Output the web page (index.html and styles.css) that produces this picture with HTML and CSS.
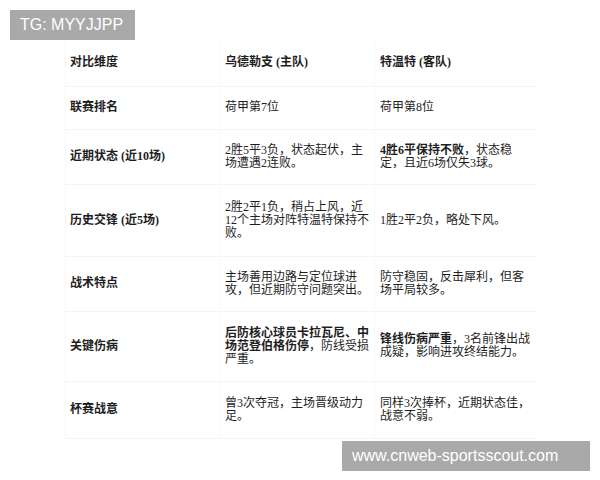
FILE: index.html
```html
<!DOCTYPE html>
<html lang="zh">
<head>
<meta charset="utf-8">
<link rel="stylesheet" href="styles.css">
</head>
<body>
<div class="badge top">TG: MYYJJPP</div>
<table class="cmp">
  <colgroup><col class="c1"><col class="c2"><col class="c3"></colgroup>
  <tr class="r0"><th>对比维度</th><th class="m">乌德勒支 (主队)</th><th class="l">特温特 (客队)</th></tr>
  <tr class="r1"><th>联赛排名</th><td class="m">荷甲第7位</td><td class="l">荷甲第8位</td></tr>
  <tr class="r2"><th>近期状态 (近10场)</th><td class="m">2胜5平3负，状态起伏，主场遭遇2连败。</td><td class="l"><b>4胜6平保持不败</b>，状态稳定，且近6场仅失3球。</td></tr>
  <tr class="r3"><th>历史交锋 (近5场)</th><td class="m">2胜2平1负，稍占上风，近12个主场对阵特温特保持不败。</td><td class="l">1胜2平2负，略处下风。</td></tr>
  <tr class="r4"><th>战术特点</th><td class="m">主场善用边路与定位球进攻，但近期防守问题突出。</td><td class="l">防守稳固，反击犀利，但客场平局较多。</td></tr>
  <tr class="r5"><th>关键伤病</th><td class="m"><b>后防核心球员卡拉瓦尼、中场范登伯格伤停</b>，防线受损严重。</td><td class="l"><b>锋线伤病严重</b>，3名前锋出战成疑，影响进攻终结能力。</td></tr>
  <tr class="r6"><th>杯赛战意</th><td class="m">曾3次夺冠，主场晋级动力足。</td><td class="l">同样3次捧杯，近期状态佳，战意不弱。</td></tr>
</table>
<div class="foot"><div class="badge bottom">www.cnweb-sportsscout.com</div></div>
</body>
</html>
```
FILE: styles.css
```css
html, body { margin: 0; padding: 0; background: #fff; }
body { width: 600px; height: 480px; overflow: hidden; }
.badge {
  background: #a9a9a9;
  color: #fff;
  font-family: "Liberation Sans", Arial, sans-serif;
  font-size: 16px;
  height: 30px;
  line-height: 30px;
  box-sizing: border-box;
}
.top { width: 125px; margin: 10px 0 0 10px; padding-left: 10px; }
.cmp {
  margin-left: 65px;
  width: 470px;
  border-collapse: collapse;
  table-layout: fixed;
  font-family: "Liberation Serif", "Noto Sans CJK SC", serif;
  font-size: 12px;
  line-height: 13px;
  color: #1e1e1e;
}
.c1 { width: 154px; }
.c2 { width: 155px; }
.c3 { width: 161px; }
.cmp th, .cmp td {
  border-top: 1px solid #f4f4f4;
  border-bottom: 1px solid #f4f4f4;
  border-left: 1px solid #f7f7f7;
  padding: 0 4px 0 4px;
  text-align: left;
  vertical-align: middle;
}
.cmp .m { padding: 0 4px 0 5px; }
.cmp .l { padding: 0 2px 0 5px; }
.cmp tr:first-child th { border-top: none; }
.cmp th { font-weight: bold; }
.cmp b { font-weight: bold; }
.r0 { height: 46px; }
.r1 { height: 43px; }
.r2 { height: 55px; }
.r3 { height: 72px; }
.r4 { height: 55px; }
.r5 { height: 70px; }
.r6 { height: 57px; }
.foot { display: flex; justify-content: flex-end; margin-top: 2px; padding-right: 10px; }
.bottom { width: 248px; padding-left: 10px; }
```
